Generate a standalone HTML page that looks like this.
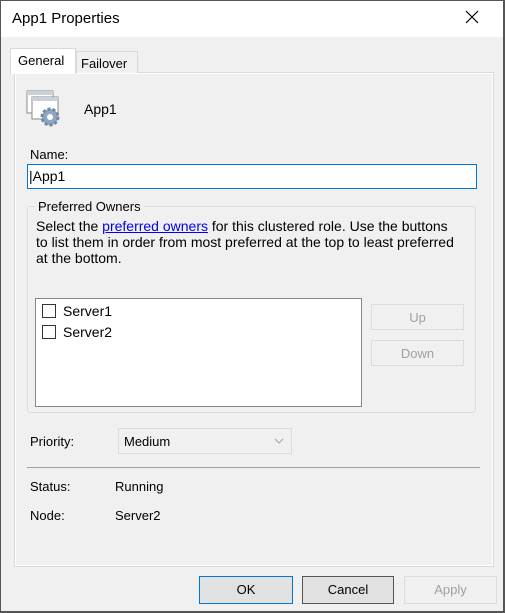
<!DOCTYPE html>
<html><head><style>
*{margin:0;padding:0;box-sizing:border-box}
body{width:505px;height:613px;position:relative;background:#f0f0f0;font-family:"Liberation Sans",sans-serif;font-size:13px;color:#000;overflow:hidden}
.a{position:absolute}
.t{position:absolute;white-space:nowrap;line-height:15px}
.btn{position:absolute;border:1px solid #adadad;background:#e1e1e1;text-align:center;line-height:25px;font-size:13px}
.cb{position:absolute;width:14px;height:14px;border:1px solid #333;background:#fff}
</style></head><body>
<div class="a" style="left:0;top:0;width:505px;height:613px;border:1px solid #555;border-width:1px 2px 2px 1px"></div>
<div class="a" style="left:1px;top:1px;width:502px;height:36px;background:#fff"></div>
<div class="t" style="left:12px;top:11px;font-size:15px">App1 Properties</div>
<svg class="a" style="left:465px;top:10px" width="14" height="14"><path d="M1 1L13 13M13 1L1 13" stroke="#000" stroke-width="1.2"/></svg>
<div class="a" style="left:14px;top:72px;width:480px;height:495px;border:1px solid #d9d9d9;background:#f9f9f9"></div>
<div class="a" style="left:15px;top:73px;width:478px;height:493px;background:#f0f0f0;border:1px solid #fff"></div>
<div class="a" style="left:76px;top:51px;width:62px;height:22px;border:1px solid #d9d9d9;border-bottom:none;background:#f0f0f0"></div>
<div class="t" style="left:81px;top:56px">Failover</div>
<div class="a" style="left:10px;top:48px;width:66px;height:26px;border:1px solid #d9d9d9;border-bottom:none;background:#fff"></div>
<div class="t" style="left:18px;top:53px">General</div>
<svg class="a" style="left:26px;top:89px" width="38" height="38">
<rect x="1" y="2" width="26" height="22" fill="#fff" stroke="#8a8a8a"/><rect x="1" y="2" width="26" height="4" fill="#c8d0d8"/>
<rect x="6" y="8" width="26" height="22" fill="#fff" stroke="#8a8a8a"/><rect x="6" y="8" width="26" height="4" fill="#c8d0d8"/>
<circle cx="24" cy="28" r="8" fill="#8fa6bd" stroke="#6f8aa6" stroke-width="3" stroke-dasharray="3 2"/><circle cx="24" cy="28" r="3" fill="#fff"/>
</svg>
<div class="t" style="left:84px;top:102px;font-size:14px">App1</div>
<div class="t" style="left:30px;top:147px">Name:</div>
<div class="a" style="left:27px;top:164px;width:450px;height:25px;border:1px solid #0078d7;background:#fff"></div>
<div class="t" style="left:29px;top:169px;font-size:14px">|App1</div>
<div class="a" style="left:27px;top:206px;width:449px;height:207px;border:1px solid #dcdcdc;border-radius:3px"></div>
<div class="t" style="left:35px;top:199px;background:#f0f0f0;padding:0 3px">Preferred Owners</div>
<div class="t" style="left:36px;top:218px;line-height:16px;font-size:14px">Select the <span style="color:#0000ee;text-decoration:underline">preferred owners</span> for this clustered role. Use the buttons<br>to list them in order from most preferred at the top to least preferred<br>at the bottom.</div>
<div class="a" style="left:35px;top:298px;width:327px;height:109px;border:1px solid #828790;background:#fff"></div>
<div class="cb" style="left:42px;top:304px"></div><div class="t" style="left:63px;top:304px;font-size:14px">Server1</div>
<div class="cb" style="left:42px;top:325px"></div><div class="t" style="left:63px;top:325px;font-size:14px">Server2</div>
<div class="btn" style="left:371px;top:304px;width:93px;height:26px;background:#f0f0f0;border-color:#dcdcdc;color:#a0a0a0">Up</div>
<div class="btn" style="left:371px;top:340px;width:93px;height:26px;background:#f0f0f0;border-color:#dcdcdc;color:#a0a0a0">Down</div>
<div class="t" style="left:30px;top:434px">Priority:</div>
<div class="a" style="left:118px;top:428px;width:174px;height:26px;border:1px solid #dcdcdc;background:#f0f0f0"></div>
<div class="t" style="left:124px;top:434px">Medium</div>
<svg class="a" style="left:274px;top:437px" width="10" height="8"><path d="M1 2L5 6L9 2" fill="none" stroke="#a0a0a0"/></svg>
<div class="a" style="left:27px;top:467px;width:453px;height:1px;background:#a0a0a0"></div>
<div class="t" style="left:30px;top:479px">Status:</div><div class="t" style="left:115px;top:479px">Running</div>
<div class="t" style="left:30px;top:508px">Node:</div><div class="t" style="left:115px;top:508px">Server2</div>
<div class="btn" style="left:199px;top:576px;width:94px;height:28px;border:1px solid #0078d7">OK</div>
<div class="btn" style="left:302px;top:576px;width:92px;height:28px;border-color:#555">Cancel</div>
<div class="btn" style="left:404px;top:576px;width:93px;height:28px;background:#f0f0f0;border-color:#dcdcdc;color:#a0a0a0">Apply</div>
</body></html>
